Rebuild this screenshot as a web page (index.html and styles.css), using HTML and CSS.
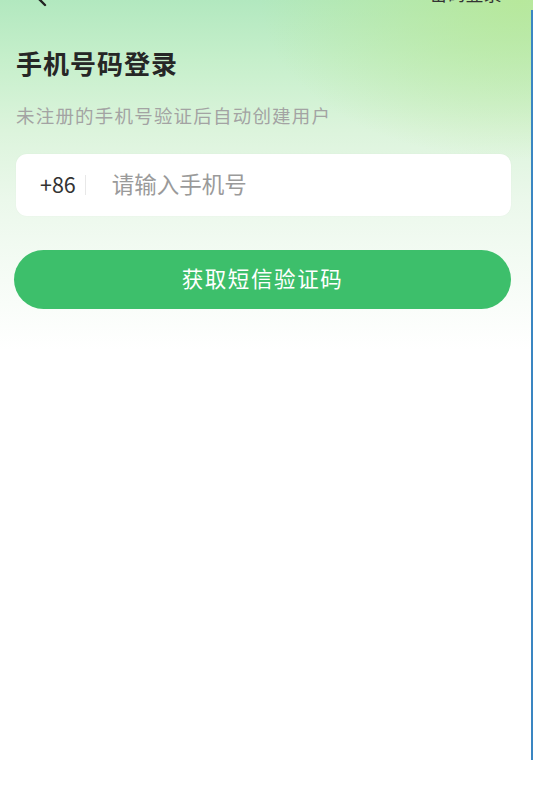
FILE: index.html
```html
<!DOCTYPE html>
<html lang="zh-CN">
<head>
<meta charset="utf-8">
<title>手机号码登录</title>
<link rel="stylesheet" href="styles.css">
</head>
<body>
<div class="page">
  <header class="topbar">
    <svg class="back" width="20" height="20" viewBox="0 0 20 20"><path d="M13 2 L5 10 L13 18" fill="none" stroke="#222" stroke-width="2.4" stroke-linecap="round" stroke-linejoin="round"/></svg>
    <span class="switch">密码登录 ›</span>
  </header>
  <main class="content">
    <h1 class="title">手机号码登录</h1>
    <p class="subtitle">未注册的手机号验证后自动创建用户</p>
    <div class="phone-card">
      <span class="code">+86</span>
      <span class="divider"></span>
      <input class="phone-input" type="tel" placeholder="请输入手机号">
    </div>
    <button class="submit">获取短信验证码</button>
  </main>
  <div class="edge-line"></div>
</div>
</body>
</html>
```
FILE: styles.css
```css
html, body {
  margin: 0;
  padding: 0;
}
body {
  width: 533px;
  height: 795px;
  overflow: hidden;
  font-family: "Noto Sans CJK SC", "Noto Sans", sans-serif;
  background: #ffffff;
}
.page {
  position: relative;
  display: flow-root;
  height: 795px;
  background:
    radial-gradient(ellipse 260px 160px at 520px 0px, rgba(184, 232, 150, 0.85), rgba(184, 232, 150, 0) 100%),
    linear-gradient(180deg, #b2e8bf 0px, #c6efcb 60px, #dcf4dc 130px, #ebf8eb 200px, #f6fcf6 280px, #ffffff 350px);
}
.topbar {
  display: flex;
  justify-content: space-between;
  align-items: flex-end;
  height: 24px;
  margin-top: -17px;
  padding: 0 22px 0 32px;
}
.back {
  display: block;
}
.switch {
  margin-bottom: 4px;
  font-size: 18px;
  line-height: 20px;
  color: #333;
}
.content {
  padding: 0 22px 0 16px;
}
.title {
  margin: 0;
  margin-top: 38px;
  font-size: 26px;
  line-height: 35px;
  font-weight: 700;
  color: #262626;
  letter-spacing: 1px;
}
.subtitle {
  margin: 22px 0 0;
  font-size: 18.5px;
  line-height: 27px;
  color: #a3a3a3;
  letter-spacing: 1.2px;
}
.phone-card {
  display: flex;
  align-items: center;
  height: 62px;
  margin-top: 25px;
  padding-left: 24px;
  background: #ffffff;
  border-radius: 11px;
  box-shadow: 0 0 2px rgba(0, 0, 0, 0.04);
}
.code {
  font-size: 21.5px;
  color: #333;
  padding-bottom: 3px;
}
.divider {
  width: 1px;
  height: 20px;
  margin: 0 26px 0 9px;
  background: #e8e8e8;
}
.phone-input {
  flex: 1;
  border: none;
  outline: none;
  background: transparent;
  font-family: "Noto Sans CJK SC", "Noto Sans", sans-serif;
  font-size: 22.5px;
  color: #333;
  padding: 0 0 4px;
}
.phone-input::placeholder {
  color: #9a9a9a;
}
.submit {
  display: block;
  width: 497px;
  height: 59px;
  margin: 34px 0 0 -2px;
  padding: 0 0 4px;
  border: none;
  border-radius: 30px;
  background: #3dbf6b;
  color: #ffffff;
  font-family: "Noto Sans CJK SC", "Noto Sans", sans-serif;
  font-size: 21.5px;
  letter-spacing: 1.6px;
}
.edge-line {
  position: absolute;
  right: 0;
  top: 10px;
  width: 2px;
  height: 750px;
  background: #3a86c2;
}
```
